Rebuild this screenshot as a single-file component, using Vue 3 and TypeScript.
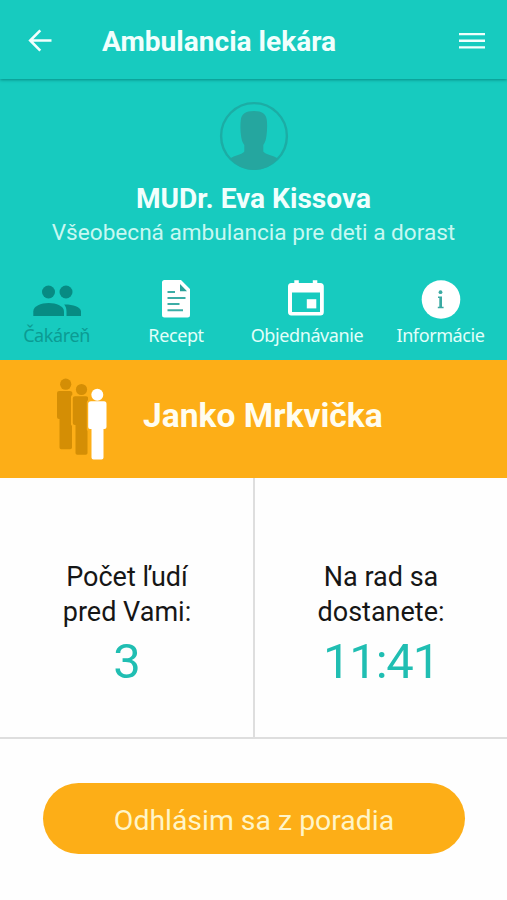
<script setup lang="ts">
import { ref } from 'vue'

interface Tab {
  id: string
  label: string
}

const tabs: Tab[] = [
  { id: 'queue', label: 'Čakáreň' },
  { id: 'recipe', label: 'Recept' },
  { id: 'booking', label: 'Objednávanie' },
  { id: 'info', label: 'Informácie' },
]
const active = ref('queue')
const peopleAhead = ref(3)
const expectedTime = ref('11:41')
</script>

<template>
  <main class="screen">
    <header class="bar">
      <button class="icon-button back" aria-label="Späť">
        <svg width="24" height="24" viewBox="0 0 24 24" fill="none" stroke="currentColor" stroke-width="2.6">
          <path d="M23.500 11.500H2.500M12.300 1.400L2.200 11.500l10.100 10.100" />
        </svg>
      </button>
      <h1 class="title">Ambulancia lekára</h1>
      <button class="icon-button menu" aria-label="Menu">
        <svg width="26" height="18" viewBox="0 0 26 18" fill="currentColor">
          <path d="M0 1h26v2.300H0zM0 7.600h26v2.300H0zM0 14.200h26v2.300H0z" />
        </svg>
      </button>
    </header>

    <section class="profile">
      <svg class="avatar" width="70" height="70" viewBox="0 0 70 70">
        <circle cx="35" cy="35" r="32.9" fill="none" stroke="#1cada5" stroke-width="2.4" />
        <path
          fill="#25a69f"
          d="M11.200 57.600C15 54.500 23.500 53.600 25.300 50.500V44C23 41 22.500 38 22 34.500c-.7-5-.8-11-.2-15.500.8-6 4.700-8.900 13-8.900s12.300 2.900 13 8.900c.5 4.500.4 10.500-.3 15.500-.5 3.500-1 6.500-3.200 9.500v6.500c1.800 3.100 10.500 4 14.500 7.100C53 64.800 44.600 69 35 69S17 64.800 11.200 57.600z"
        />
      </svg>
      <h2 class="doctor">MUDr. Eva Kissova</h2>
      <p class="specialty">Všeobecná ambulancia pre deti a dorast</p>
    </section>

    <nav class="tabs">
      <button
        v-for="tab in tabs"
        :key="tab.id"
        class="tab"
        :class="{ active: tab.id === active }"
        @click="active = tab.id"
      >
        <svg v-if="tab.id === 'queue'" width="48" height="40" viewBox="0 0 48 40" fill="currentColor">
          <circle cx="15.500" cy="12" r="6.500" />
          <circle cx="33" cy="12" r="6.500" />
          <path d="M.3 36v-4.500C.3 26 8 23 15.700 23S31 26 31 31.500V36z" />
          <path d="M33.500 36v-4.500c0-3-.8-5.100-2.300-7C39 24.300 48 26.500 48 31.500V36z" />
        </svg>
        <svg v-else-if="tab.id === 'recipe'" width="30" height="40" viewBox="0 0 30 40">
          <path
            fill="currentColor"
            d="M3.500 0H20l9 9v26a2.500 2.500 0 0 1-2.500 2.500h-23A2.500 2.500 0 0 1 1 35V2.500A2.500 2.500 0 0 1 3.500 0z"
          />
          <path fill="#2a9f98" d="M19 4v7.200h7z" />
          <path stroke="#3cada6" stroke-width="1.900" d="M6.500 12h7.500M6.500 18h18M6.500 24h12M6.500 30.200h15.500" />
        </svg>
        <svg
          v-else-if="tab.id === 'booking'"
          class="calendar"
          width="36"
          height="40"
          viewBox="0 0 36 40"
          fill="currentColor"
        >
          <path
            fill-rule="evenodd"
            d="M6.300.2h4.500V3h14V.200h4.500V3h3a3.500 3.500 0 0 1 3.500 3.500v25.500a3.500 3.500 0 0 1-3.500 3.500h-29A3.500 3.500 0 0 1 0 32V6.500A3.500 3.500 0 0 1 3.300 3h3zM4 12.500V32h28V12.500z"
          />
          <path d="M18.800 19.200h9.500v9.200h-9.500z" />
        </svg>
        <svg v-else width="40" height="40" viewBox="0 0 40 40">
          <circle cx="20" cy="19.500" r="19.300" fill="currentColor" />
          <circle cx="19.500" cy="12.200" r="1.900" fill="#3aa9a2" />
          <path fill="#3aa9a2" d="M17 16.500h4v10.200h1.600v1.600h-5.800v-1.600h1.500v-8.600H17z" />
        </svg>
        <span class="label">{{ tab.label }}</span>
      </button>
    </nav>

    <section class="patient">
      <svg class="queue-icon" width="54" height="86" viewBox="0 0 54 86">
        <g fill="#d48e05">
          <circle cx="9.700" cy="7.200" r="5.600" />
          <path d="M3.200 14H14q2 0 2.300 1.500V18q-1.300.5-1.300 2v27.500l1 1.500v21.500q0 1.800-1.800 1.800H5.300q-1.800 0-1.800-1.800V42H3q-2 0-2-2V16q0-2 2.200-2z" />
          <circle cx="25.500" cy="12.500" r="5.600" />
          <path d="M19 19.300H29.700q2 0 2.300 1.300v2.700q-1.200.5-1.200 2v27.500l.7 1.200V76q0 1.800-1.800 1.800h-8.400q-1.800 0-1.800-1.800V48H18.800q-2 0-2-2V21.300q0-2 2.200-2z" />
        </g>
        <g fill="#fff">
          <circle cx="41.300" cy="17.700" r="6" />
          <path d="M35 24.200h13q2.500 0 2.500 2.500V50q0 2-2 2H47.500v28.500q0 2-2 2h-8q-2 0-2-2V52H34q-1.800 0-1.800-2V26.700q0-2.500 2.800-2.500z" />
        </g>
      </svg>
      <strong class="patient-name">Janko Mrkvička</strong>
    </section>

    <section class="stats">
      <div class="stat">
        <p class="caption">Počet ľudí<br />pred Vami:</p>
        <p class="value">{{ peopleAhead }}</p>
      </div>
      <div class="stat">
        <p class="caption">Na rad sa<br />dostanete:</p>
        <p class="value time">{{ expectedTime }}</p>
      </div>
    </section>

    <footer class="actions">
      <button class="leave">Odhlásim sa z poradia</button>
    </footer>
  </main>
</template>

<style>
body {
  margin: 0;
  background: #fefefe;
}
</style>

<style scoped>
* {
  box-sizing: border-box;
}
h1,
h2,
p {
  margin: 0;
}
button {
  border: 0;
  padding: 0;
  background: none;
  color: inherit;
  font: inherit;
}
svg {
  display: block;
  flex: none;
}
.screen {
  width: 507px;
  height: 900px;
  display: flex;
  flex-direction: column;
  background: #fefefe;
  color: #f1fffd;
  font-family: Roboto, 'Noto Sans', sans-serif;
  white-space: nowrap;
  overflow: hidden;
}
.bar {
  height: 79px;
  flex: none;
  display: flex;
  align-items: center;
  padding: 2px 22px 0 28px;
  background: #17cbbf;
  box-shadow: 0 1px 3px #078d86;
  z-index: 1;
}
.title {
  margin-left: 50px;
  padding-top: 2px;
  font-size: 28.1px;
  line-height: 34px;
  font-weight: 700;
}
.menu {
  margin-left: auto;
}
.profile {
  height: 175px;
  flex: none;
  display: flex;
  flex-direction: column;
  align-items: center;
  padding-top: 22px;
  background: #17cbbf;
}
.doctor {
  margin-top: 11px;
  font-size: 28.1px;
  line-height: 34px;
  font-weight: 700;
}
.specialty {
  font-size: 22.6px;
  line-height: 34px;
  color: #c8f8f2;
}
.tabs {
  height: 106px;
  flex: none;
  display: grid;
  grid-template-columns: 113px 126px 136px 131px;
  padding-top: 26px;
  background: #17cbbf;
}
.tab {
  display: flex;
  flex-direction: column;
  align-items: center;
  color: #fff;
}
.calendar {
  margin-right: 3px;
}
.label {
  margin-top: 3px;
  font-family: 'Noto Sans', sans-serif;
  font-size: 18px;
  line-height: 24px;
  letter-spacing: -0.4px;
  color: #e1fffa;
}
.tab.active {
  color: #078b83;
}
.tab.active .label {
  color: #0b9b93;
}
.patient {
  height: 118px;
  flex: none;
  display: flex;
  align-items: flex-start;
  padding: 17px 0 0 56px;
  background: #fdae17;
}
.patient-name {
  margin: 19px 0 0 33px;
  font-size: 33.6px;
  line-height: 40px;
  font-weight: 700;
  color: #fffdf0;
}
.stats {
  height: 261px;
  flex: none;
  display: grid;
  grid-template-columns: 254px 253px;
  border-bottom: 2px solid #dedede;
}
.stat {
  padding-top: 82px;
  text-align: center;
}
.stat + .stat {
  border-left: 2px solid #dedede;
  margin-left: -1px;
}
.caption {
  font-size: 27px;
  line-height: 35px;
  color: #161616;
}
.value {
  margin-top: 2px;
  font-size: 49px;
  line-height: 60px;
  color: #20beb2;
}
.time {
  letter-spacing: -1.2px;
}
.actions {
  padding: 44px 42px 0 43px;
}
.leave {
  width: 100%;
  height: 71px;
  border-radius: 36px;
  background: #fdae17;
  color: #fff5c8;
  font-size: 28.4px;
  line-height: 34px;
  padding-top: 4px;
}
</style>
